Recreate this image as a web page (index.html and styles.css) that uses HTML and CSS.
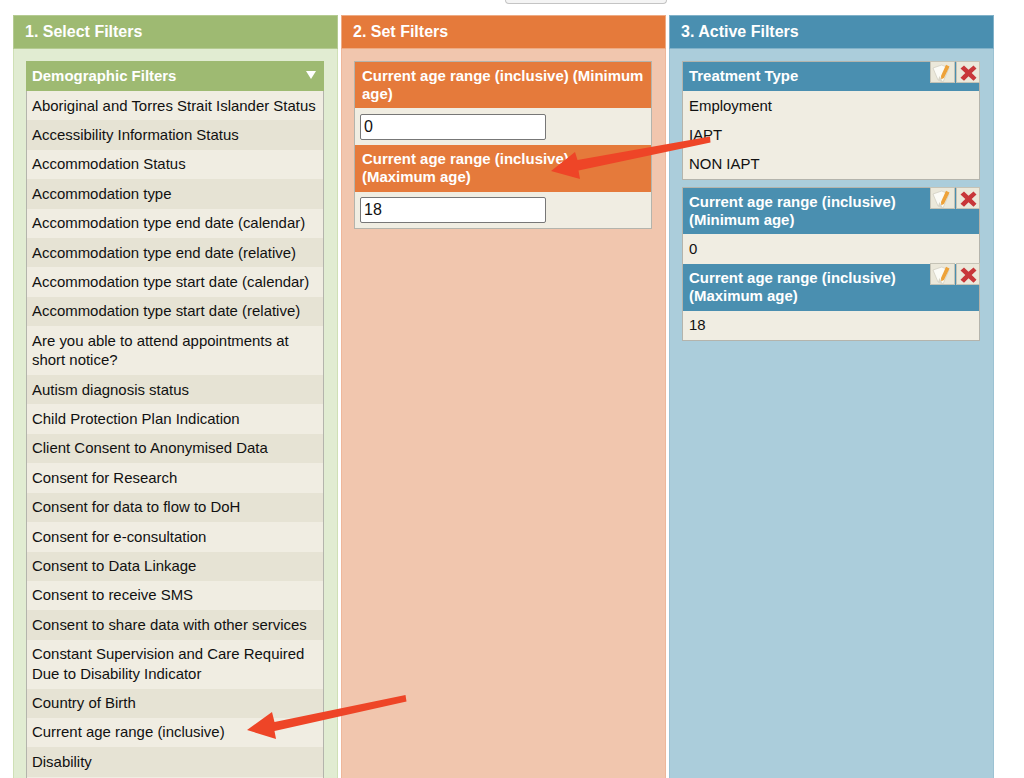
FILE: index.html
```html
<!DOCTYPE html>
<html lang="en">
<head>
<meta charset="utf-8">
<title>Filters</title>
<link rel="stylesheet" href="styles.css">
</head>
<body>
<svg width="0" height="0" class="defs" aria-hidden="true">
  <symbol id="edit" viewBox="1 1 22.5 20">
    <path d="M3 7 11.700 4 19 7 13 21 8 19Z" fill="#fbfbf6" stroke="#cfccbe" stroke-width=".7"/>
    <path d="M8 19 9.500 15 13 21Z" fill="#d9d6c8"/>
    <path d="M16 3.800 19.500 5.600 14 17 11.300 18.200 11 15Z" fill="#eda23a"/>
  </symbol>
  <symbol id="del" viewBox="1 1 22.5 20">
    <path d="M8 4.500 12.500 8.700 17.500 4.500 20.500 7.500 15.700 12 20.500 16.800 17.500 19.800 12.500 15.300 8 19.800 4.500 16.800 9.300 12 4.500 7.500Z" fill="#c8373a"/>
  </symbol>
</svg>
<div class="page">
  <div class="topbar"><div class="topbutton"></div></div>
  <div class="columns">
    <section class="col col-green">
      <h2 class="col-title">1. Select Filters</h2>
      <div class="col-body">
        <div class="box box-list">
          <div class="box-head box-head-green">Demographic Filters<span class="caret"></span></div>
          <div class="row">Aboriginal and Torres Strait Islander Status</div>
          <div class="row alt">Accessibility Information Status</div>
          <div class="row">Accommodation Status</div>
          <div class="row alt">Accommodation type</div>
          <div class="row">Accommodation type end date (calendar)</div>
          <div class="row alt">Accommodation type end date (relative)</div>
          <div class="row">Accommodation type start date (calendar)</div>
          <div class="row alt">Accommodation type start date (relative)</div>
          <div class="row">Are you able to attend appointments at short notice?</div>
          <div class="row alt">Autism diagnosis status</div>
          <div class="row">Child Protection Plan Indication</div>
          <div class="row alt">Client Consent to Anonymised Data</div>
          <div class="row">Consent for Research</div>
          <div class="row alt">Consent for data to flow to DoH</div>
          <div class="row">Consent for e-consultation</div>
          <div class="row alt">Consent to Data Linkage</div>
          <div class="row">Consent to receive SMS</div>
          <div class="row alt">Consent to share data with other services</div>
          <div class="row">Constant Supervision and Care Required Due to Disability Indicator</div>
          <div class="row alt">Country of Birth</div>
          <div class="row">Current age range (inclusive)</div>
          <div class="row alt">Disability</div>
          <div class="row">&nbsp;</div>
        </div>
      </div>
    </section>
    <section class="col col-orange">
      <h2 class="col-title">2. Set Filters</h2>
      <div class="col-body">
        <div class="box box-framed">
          <div class="box-head box-head-orange head-first">Current age range (inclusive) (Minimum age)</div>
          <div class="field"><input class="input" type="text" value="0"></div>
          <div class="box-head box-head-orange head-next">Current age range (inclusive) (Maximum age)</div>
          <div class="field"><input class="input" type="text" value="18"></div>
        </div>
      </div>
    </section>
    <section class="col col-blue">
      <h2 class="col-title">3. Active Filters</h2>
      <div class="col-body active-body">
        <div class="box box-framed">
          <div class="box-head box-head-blue head-single">Treatment Type
            <span class="tools"><span class="tool"><svg class="ico"><use href="#edit"/></svg></span><span class="tool"><svg class="ico"><use href="#del"/></svg></span></span>
          </div>
          <div class="value">Employment</div>
          <div class="value">IAPT</div>
          <div class="value">NON IAPT</div>
        </div>
        <div class="box box-framed">
          <div class="box-head box-head-blue head-first head-narrow">Current age range (inclusive) (Minimum age)
            <span class="tools"><span class="tool"><svg class="ico"><use href="#edit"/></svg></span><span class="tool"><svg class="ico"><use href="#del"/></svg></span></span>
          </div>
          <div class="value">0</div>
          <div class="box-head box-head-blue head-next head-narrow">Current age range (inclusive) (Maximum age)
            <span class="tools"><span class="tool"><svg class="ico"><use href="#edit"/></svg></span><span class="tool"><svg class="ico"><use href="#del"/></svg></span></span>
          </div>
          <div class="value">18</div>
        </div>
      </div>
    </section>
  </div>
  <svg class="arrows" viewBox="0 0 1024 778" aria-hidden="true">
    <path d="M710 136.500 L577.500 160 L575 152 L551 171 L580 179 L578.500 170.500 L710.500 142.500Z" fill="#ee4527"/>
    <path d="M405.500 695 L274.500 722 L272 712 L247 730 L276 739 L274.500 731 L406.500 701.500Z" fill="#ee4527"/>
  </svg>
</div>
</body>
</html>
```
FILE: styles.css
```css
* { box-sizing: border-box; }
html, body { margin: 0; padding: 0; background: #fff; }
body { font-family: "Liberation Sans", Arial, sans-serif; font-size: 14.95px; line-height: 19.4px; color: #111; }
.defs { position: absolute; }
.page { position: relative; height: 778px; overflow: hidden; }
.topbar { height: 15px; padding-left: 505px; }
.topbutton { width: 162px; height: 4px; background: #f4f4f4; border: 1px solid #c4c4c4; border-top: 0; border-radius: 0 0 5px 5px; }
.columns { display: flex; gap: 3px; padding-left: 13px; height: 763px; }
.col { width: 325px; flex: none; border: 1px solid transparent; border-bottom: 0; }
.col-title { margin: -1px -1px 0; height: 34px; padding: 6px 11px; font-size: 16px; line-height: 20px; font-weight: bold; color: #fff; border: 1px solid transparent; }
.col-body { padding: 12px 12px 0; height: 100%; }
.active-body { display: flex; flex-direction: column; gap: 7px; }
.col-green { background: #e1ecd2; border-color: #cfe0b6; }
.col-green .col-title { background: #9eba72; border-color: #b5cb92; }
.col-orange { background: #f1c6ae; border-color: #eeb79a; }
.col-orange .col-title { background: #e57a3b; border-color: #eeab84; }
.col-blue { background: #abcddb; border-color: #9cc2d3; }
.col-blue .col-title { background: #4a8fb0; border-color: #82b2c9; }
.box { width: 298px; background: #f0ede2; border: 1px solid #b4b4ac; border-top: 0; }
.box-framed { border-top: 1px solid #b4b4ac; }
.box-head { position: relative; padding: 5px 6px; font-weight: bold; color: #fff; line-height: 18px; }
.box-head-green { margin: 0 -1px; background: #9eba72; padding: 6px 6px; height: 30px; }
.box-head-orange { background: #e57a3b; padding-left: 7px; padding-right: 7px; }
.box-head-blue { background: #4a8fb0; }
.head-first { height: 46px; }
.head-next { height: 47px; }
.head-single { height: 29px; }
.head-narrow { padding-right: 60px; }
.caret { position: absolute; right: 8px; top: 10px; width: 0; height: 0; border-left: 5px solid transparent; border-right: 5px solid transparent; border-top: 8px solid #fff; }
.row { padding: 4.5px 5px 5.5px; background: #f0ede2; }
.row.alt { background: #e6e3d4; }
.field { height: 36.5px; padding: 5.5px 5px 0; }
.input { display: block; width: 186px; height: 26px; padding: 1px 3px; border: 1px solid #777; border-radius: 2px; background: #fff; font: 16px "Liberation Sans", Arial, sans-serif; color: #111; outline: none; }
.value { padding: 4.5px 6px 5.5px; height: 29.4px; }
.tools { position: absolute; top: -1px; right: -1px; display: flex; gap: 1px; }
.tool { display: block; width: 24.5px; height: 22px; background: #ebe8da; border: 1px solid #c5c3b6; }
.ico { display: block; width: 22.5px; height: 20px; }
.arrows { position: absolute; left: 0; top: 0; width: 1024px; height: 778px; pointer-events: none; }
```
